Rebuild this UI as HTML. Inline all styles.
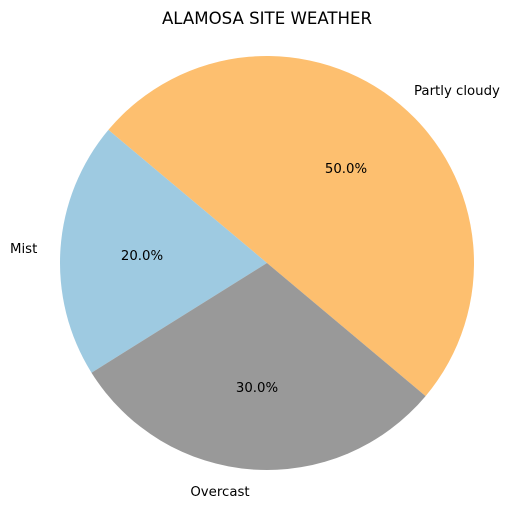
<!DOCTYPE html>
<html><head><meta charset="utf-8"><style>
html,body{margin:0;padding:0;background:#fff;}
svg{display:block;}
text{font-family:"DejaVu Sans","Liberation Sans",sans-serif;fill:#000;}
</style></head><body>
<svg width="513" height="508" viewBox="0 0 513 508" xmlns="http://www.w3.org/2000/svg">
<rect width="513" height="508" fill="#fff"/>
<path d="M267 263 L425.6 396.1 A207 207 0 0 0 108.4 129.9 Z" fill="#fdbf6f"/>
<path d="M267 263 L108.4 129.9 A207 207 0 0 0 91.5 372.7 Z" fill="#9ecae1"/>
<path d="M267 263 L91.5 372.7 A207 207 0 0 0 425.6 396.1 Z" fill="#999999"/>
<text x="267" y="24" font-size="16.6" text-anchor="middle">ALAMOSA SITE WEATHER</text>
<text x="414" y="95" font-size="13.3">Partly cloudy</text>
<text x="10" y="253" font-size="13.3">Mist</text>
<text x="220" y="496" font-size="13.3" text-anchor="middle">Overcast</text>
<text x="346" y="173" font-size="13.3" text-anchor="middle">50.0%</text>
<text x="142" y="260" font-size="13.3" text-anchor="middle">20.0%</text>
<text x="257" y="392" font-size="13.3" text-anchor="middle">30.0%</text>
</svg>
</body></html>
